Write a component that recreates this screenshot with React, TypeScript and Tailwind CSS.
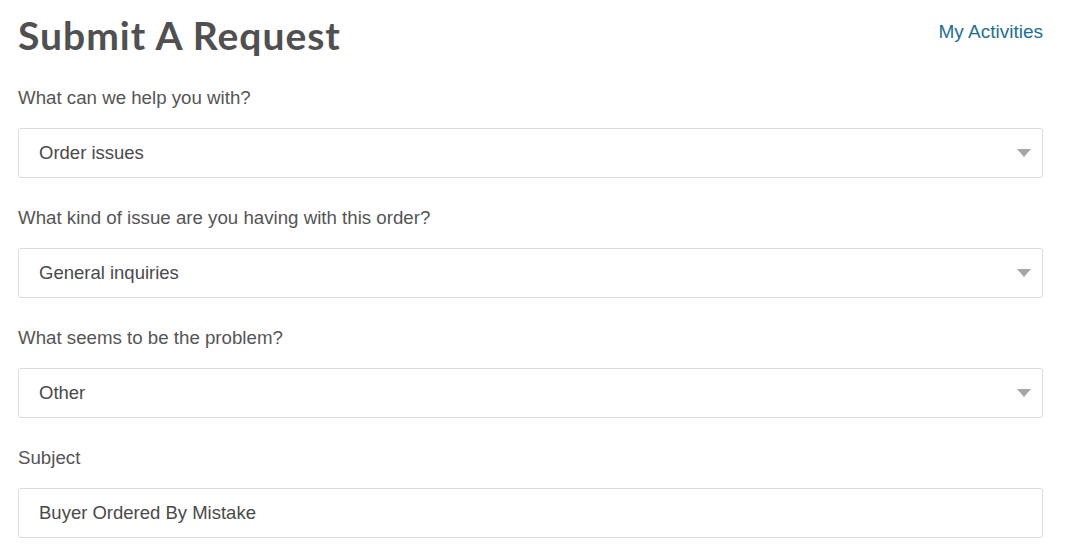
import React from "react";

const fields = [
  { label: "What can we help you with?", value: "Order issues", select: true },
  { label: "What kind of issue are you having with this order?", value: "General inquiries", select: true },
  { label: "What seems to be the problem?", value: "Other", select: true },
  { label: "Subject", value: "Buyer Ordered By Mistake", select: false },
];

const Field: React.FC<{ label: string; value: string; select: boolean }> = ({ label, value, select }) => (
  <div className="flex flex-col">
    <label className="text-[18.7px] leading-[22px] text-[#555] h-[22px]">{label}</label>
    <div className="mt-[19px] h-[50px] border border-[#dcdcdc] rounded-[3px] bg-white flex items-center pl-[20px] pr-[10px] text-[18.5px] text-[#4a4a4a]">
      <span className="flex-1">{value}</span>
      {select && (
        <svg width="14" height="8" viewBox="0 0 14 8" className="mr-[1px]">
          <path d="M0 0 L14 0 L7 8 Z" fill="#a6a6a6" />
        </svg>
      )}
    </div>
  </div>
);

export default function App() {
  return (
    <div className="min-h-screen bg-white font-['Liberation_Sans',Arial,sans-serif]">
      <div className="w-[1025px] ml-[18px] pt-[13px]">
        <div className="flex items-start justify-between">
          <h1 className="font-['Lato',sans-serif] font-bold text-[39px] leading-[44px] tracking-[1px] text-[#505050]">Submit A Request</h1>
          <a href="#" className="mt-[5px] text-[19px] text-[#1e6f8f]">My Activities</a>
        </div>
        <div className="mt-[30px] flex flex-col gap-[29px]">
          {fields.map((f) => (
            <Field key={f.label} {...f} />
          ))}
        </div>
      </div>
    </div>
  );
}
